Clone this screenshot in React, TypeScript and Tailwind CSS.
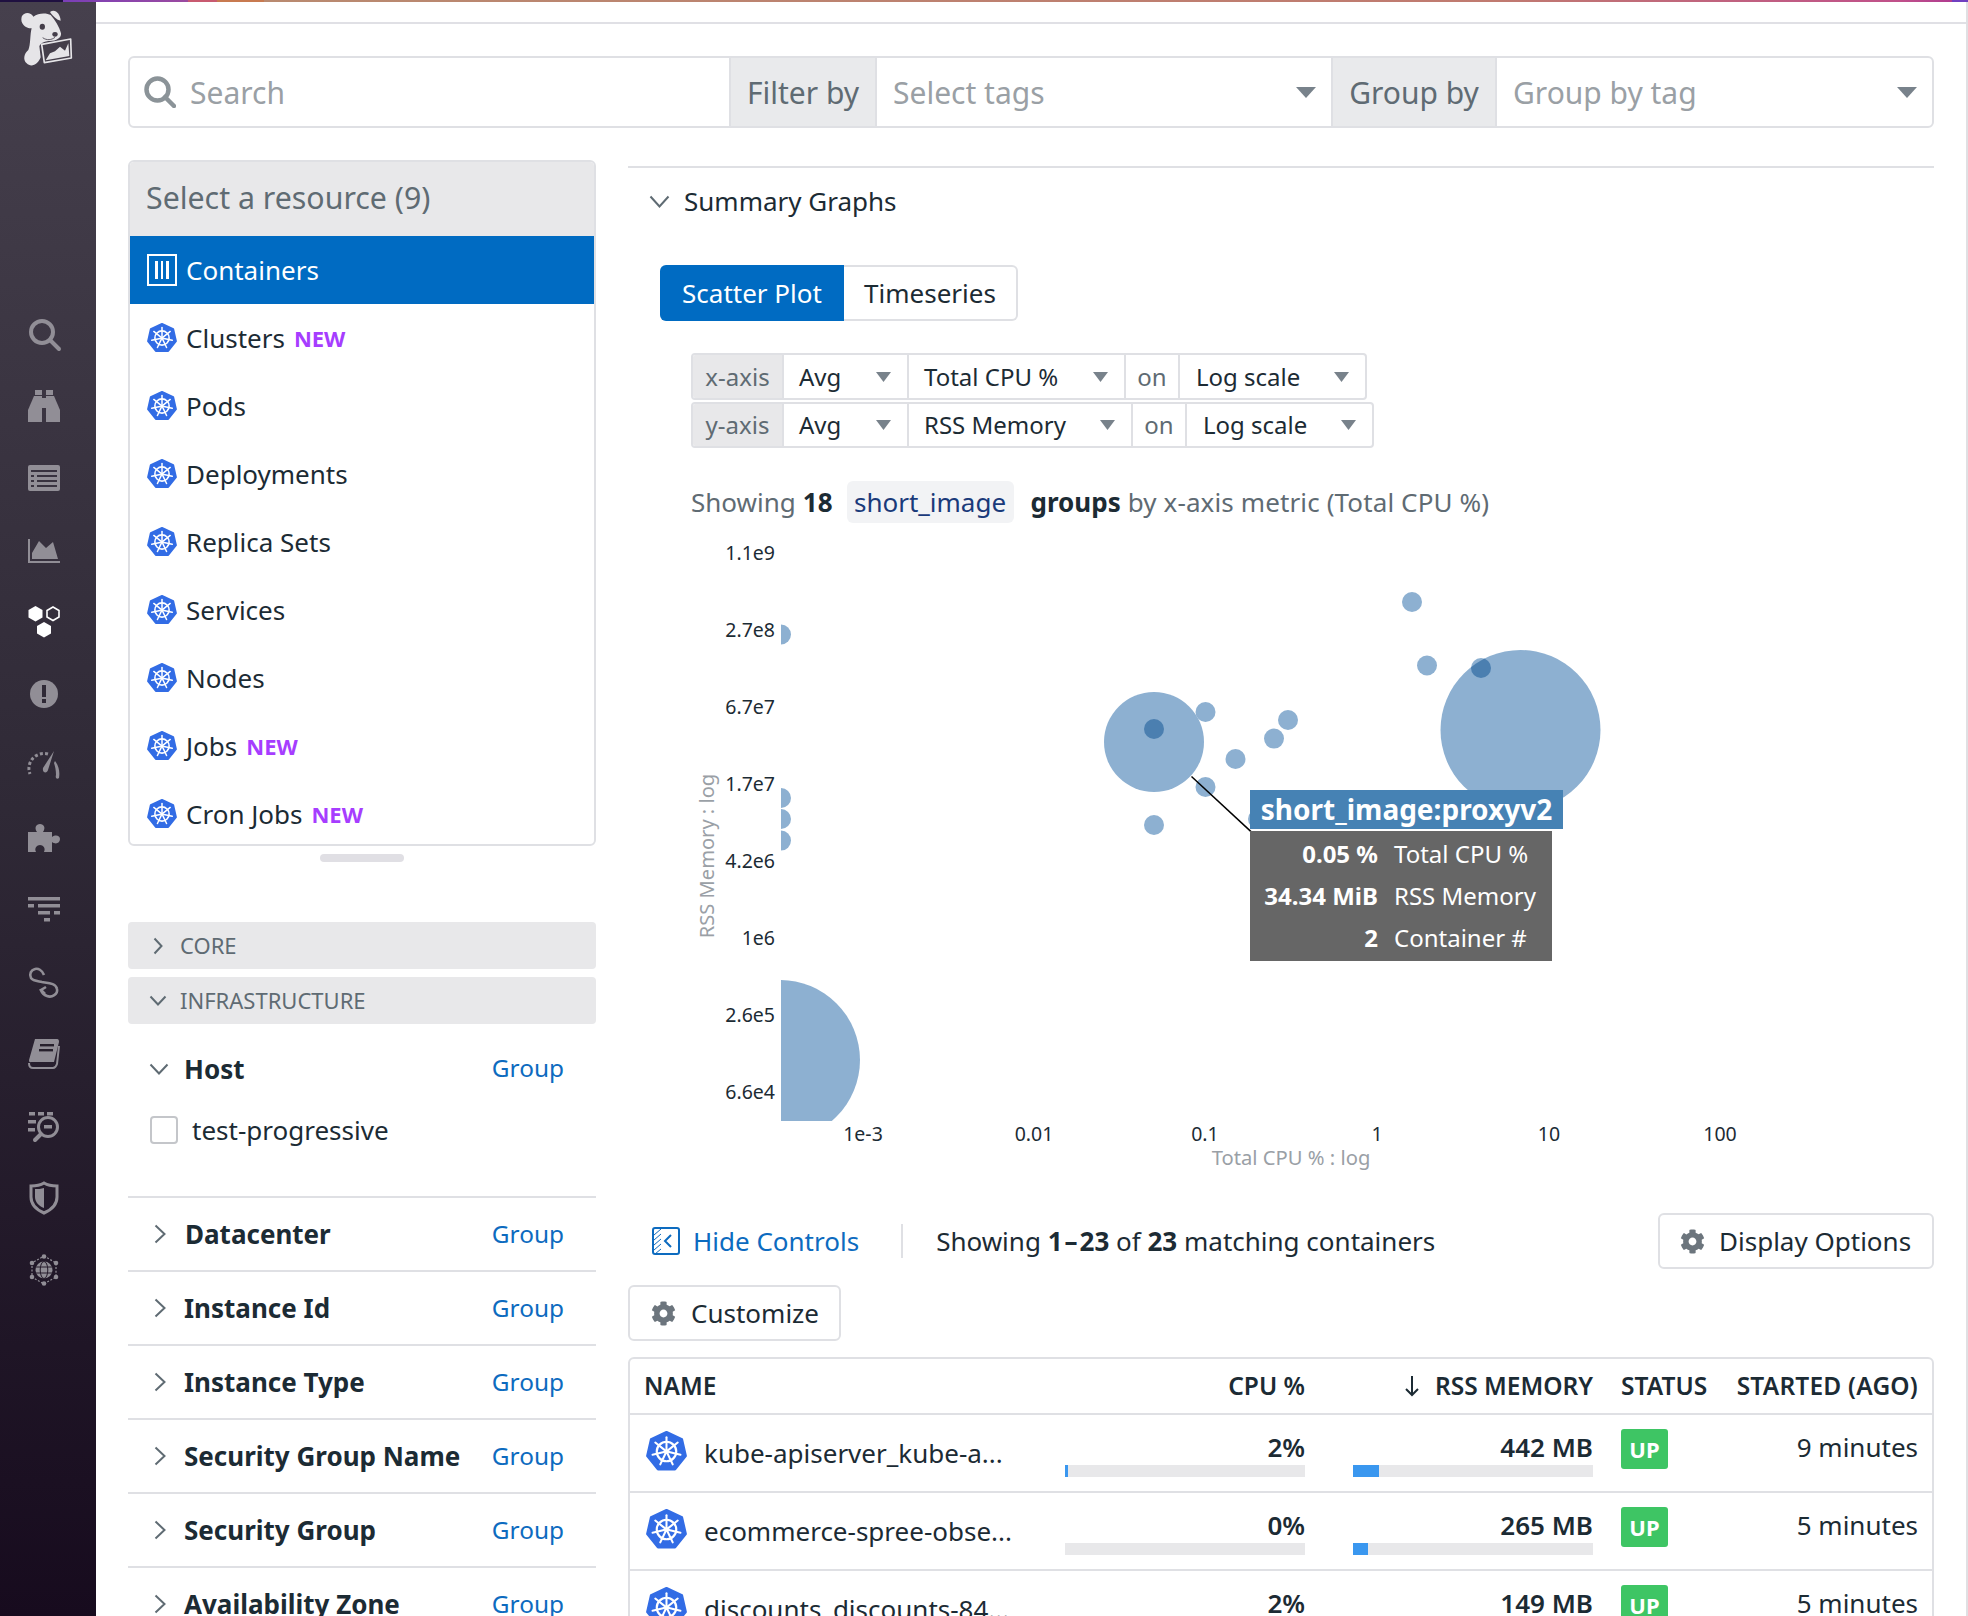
import React from "react";
import { FaCog } from "react-icons/fa";

const G = "#918e96";

function K8s({ size = 30 }: { size?: number }) {
  const spokes = Array.from({ length: 7 }, (_, i) => {
    const a = (-90 + (i * 360) / 7) * (Math.PI / 180);
    return { x: 16 + Math.cos(a) * 11.2, y: 16 + Math.sin(a) * 11.2, x0: 16 + Math.cos(a) * 2, y0: 16 + Math.sin(a) * 2 };
  });
  return (
    <svg width={size} height={size} viewBox="0 0 32 32" className="shrink-0">
      <polygon points="16,1 28,6.6 30.9,19.4 22.6,29.8 9.4,29.8 1.1,19.4 4,6.6" fill="#326ce5" stroke="#326ce5" strokeWidth="2" strokeLinejoin="round" />
      <circle cx="16" cy="16" r="7.6" fill="none" stroke="#fff" strokeWidth="1.7" />
      <circle cx="16" cy="16" r="2" fill="#fff" />
      {spokes.map((s, i) => (
        <line key={i} x1={s.x0} y1={s.y0} x2={s.x} y2={s.y} stroke="#fff" strokeWidth="1.6" strokeLinecap="round" />
      ))}
    </svg>
  );
}

function Chevron({ dir, color = "#5f6b73", w = 12, h = 20 }: { dir: "right" | "down"; color?: string; w?: number; h?: number }) {
  return (
    <svg width={w} height={h} viewBox={`0 0 ${w} ${h}`} className="shrink-0">
      {dir === "right" ? (
        <polyline points={`1.5,1.5 ${w - 1.5},${h / 2} 1.5,${h - 1.5}`} fill="none" stroke={color} strokeWidth="2" />
      ) : (
        <polyline points={`1.5,1.5 ${w / 2},${h - 1.5} ${w - 1.5},1.5`} fill="none" stroke={color} strokeWidth="2" />
      )}
    </svg>
  );
}

function Caret({ w = 15, h = 10, color = "#78828b" }: { w?: number; h?: number; color?: string }) {
  return (
    <svg width={w} height={h} viewBox={`0 0 ${w} ${h}`} className="shrink-0">
      <polygon points={`0,0 ${w},0 ${w / 2},${h}`} fill={color} />
    </svg>
  );
}

function Logo() {
  return (
    <svg width="96" height="70" viewBox="0 6 288 210" className="shrink-0">
      <g fill="#e6e5e8">
        <path d="M100 50C115 38 140 38 152 45C165 60 178 80 183 100C185 115 165 125 145 123C130 125 122 130 118 138L122 172C116 190 95 205 80 190C68 180 72 160 85 150C92 135 90 100 95 85C75 85 60 70 65 50C72 35 92 35 100 50Z" />
        <path d="M150 36C165 25 180 40 182 62C170 60 160 50 150 36Z" />
      </g>
      <polygon points="125,133 212,117 214,174 133,188" fill="#443e4a" stroke="#e6e5e8" strokeWidth="5" strokeLinejoin="round" />
      <polygon points="137,181 150,160 165,154 180,140 195,152 205,130 208,168" fill="#e6e5e8" />
      <ellipse cx="127" cy="80" rx="8" ry="9" fill="#443e4a" />
      <ellipse cx="165" cy="103" rx="8" ry="7" fill="#443e4a" />
      <path d="M128 113C140 122 155 120 165 112" fill="none" stroke="#443e4a" strokeWidth="2.5" />
    </svg>
  );
}

const side: React.ReactNode[] = [
  <g key="s" fill="none" stroke={G} strokeWidth="4"><circle cx="14" cy="14" r="11" /><line x1="22" y1="22" x2="31" y2="31" strokeLinecap="round" strokeWidth="4" /></g>,
  <g key="b" fill={G}><rect x="7" y="0" width="7" height="5" /><rect x="18" y="0" width="7" height="5" /><path d="M6 6H14V32H0V20Z" /><path d="M18 6H26L32 20V32H18Z" /><rect x="14" y="8" width="4" height="10" /></g>,
  <g key="l"><rect x="0" y="3" width="32" height="26" rx="2" fill={G} /><g fill="#38323f"><rect x="3" y="8" width="26" height="2" /><rect x="3" y="13" width="3" height="2" /><rect x="9" y="13" width="20" height="2" /><rect x="3" y="18" width="3" height="2" /><rect x="9" y="18" width="20" height="2" /><rect x="3" y="23" width="3" height="2" /><rect x="9" y="23" width="20" height="2" /></g></g>,
  <g key="c" fill={G} transform="translate(0 3)"><rect x="0" y="2" width="2" height="24" /><rect x="0" y="24" width="32" height="2" /><path d="M4 22V16L11 4L18 11L25 5L30 22Z" /></g>,
  <g key="h"><polygon points="7.5,0 14.5,4 14.5,11.5 7.5,15.5 0.5,11.5 0.5,4" fill="#fff" /><polygon points="25,1 31,4.5 31,11 25,14.5 19,11 19,4.5" fill="none" stroke="#fff" strokeWidth="1.6" /><polygon points="16,16 23,20 23,27.5 16,31.5 9,27.5 9,20" fill="#fff" /></g>,
  <g key="a"><circle cx="16" cy="16" r="14" fill={G} /><rect x="14" y="7" width="4" height="12" fill="#2f2936" /><rect x="14" y="21" width="4" height="4" fill="#2f2936" /></g>,
  <g key="g" fill={G}><path d="M26 1L20 20C19 24 14 23 15 18Z" /><path d="M27 11C31 16 32 22 31 28C29 30 27 28 28 25C28 20 27 16 26 13Z" /><path d="M20 4A15 15 0 0 0 2 24" fill="none" stroke={G} strokeWidth="3" strokeDasharray="3 2.2" /></g>,
  <g key="p" fill={G} transform="translate(0 2)"><path d="M0 8H9C6 4 8 0 12 0C16 0 18 4 15 8H24V13C28 10 32 12 32 15C32 19 28 21 24 18V28H16C18 24 15 21 12 21C9 21 6 24 8 28H0Z" /></g>,
  <g key="f" fill={G} transform="translate(0 3)"><rect x="0" y="0" width="32" height="3.5" /><rect x="0" y="7" width="6" height="3.5" /><rect x="10" y="7" width="22" height="3.5" /><rect x="10" y="14" width="12" height="3.5" /><rect x="26" y="14" width="6" height="3.5" /><rect x="16" y="21" width="6" height="3.5" /></g>,
  <g key="o" fill="none" stroke={G} strokeWidth="2.6"><path d="M16 9C14 4 10 2 7 3C3 4 1 8 3 12C5 15 9 15 14 16C20 17 28 17 29 23C30 28 24 32 19 30C16 29 14 27 13 24" /><polyline points="18,21 13,24 17,28" /></g>,
  <g key="k" fill={G}><path d="M7 1H29C31 1 31 3 31 4L26 24H4C2 24 1 25 1 22Z" /><path d="M1 25C1 29 3 30 5 30H25C27 30 28 29 29 26L31 8" fill="none" stroke={G} strokeWidth="2" /><rect x="12" y="6" width="14" height="2.4" fill="#26202c" /><rect x="11" y="11" width="14" height="2.4" fill="#26202c" /></g>,
  <g key="q" transform="translate(0 2)"><g fill={G}><rect x="1" y="0" width="6" height="3.5" /><rect x="10" y="0" width="6" height="3.5" /><rect x="19" y="0" width="6" height="3.5" /><rect x="0" y="8" width="8" height="3.5" /><rect x="0" y="16" width="7" height="3.5" /></g><circle cx="20" cy="15" r="9.5" fill="none" stroke={G} strokeWidth="3" /><rect x="16" y="13" width="8" height="3.5" fill={G} /><line x1="13" y1="22" x2="7" y2="28" stroke={G} strokeWidth="4" strokeLinecap="round" /></g>,
  <g key="d"><path d="M16 1C21 4 26 4 29 4V15C29 23 23 28 16 31C9 28 3 23 3 15V4C6 4 11 4 16 1Z" fill="none" stroke={G} strokeWidth="3" /><path d="M16 6V26C11 24 7 20 7 15V7C10 7 13 7 16 6Z" fill={G} /></g>,
  <g key="w"><circle cx="16" cy="16" r="8.5" fill={G} /><g fill="none" stroke="#241b2a" strokeWidth="1"><ellipse cx="16" cy="16" rx="3.8" ry="8.5" /><line x1="7.5" y1="13" x2="24.5" y2="13" /><line x1="7.5" y1="19" x2="24.5" y2="19" /></g><polygon points="16,2 28,9 28,23 16,30 4,23 4,9" fill="none" stroke={G} strokeWidth="1.2" strokeDasharray="2 1.6" /><g fill={G}><circle cx="16" cy="2.5" r="2.3" /><circle cx="28" cy="9" r="2.3" /><circle cx="28" cy="23" r="2.3" /><circle cx="16" cy="29.5" r="2.3" /><circle cx="4" cy="23" r="2.3" /><circle cx="4" cy="9" r="2.3" /></g></g>,
];

const resources = [
  ["Clusters", true],
  ["Pods", false],
  ["Deployments", false],
  ["Replica Sets", false],
  ["Services", false],
  ["Nodes", false],
  ["Jobs", true],
  ["Cron Jobs", true],
] as const;

const facets = ["Datacenter", "Instance Id", "Instance Type", "Security Group Name", "Security Group", "Availability Zone"];

const small = [
  [1412, 602], [1427, 665.5], [1481, 668], [1154, 729], [1205.5, 712], [1288, 720], [1274, 738.6], [1235.5, 759], [1205.5, 787], [1154, 825], [1258, 819],
  [781, 634.5], [781, 798], [781, 819], [781, 840.6],
];

const yTicks = [["1.1e9", 552.5], ["2.7e8", 630], ["6.7e7", 707], ["1.7e7", 784], ["4.2e6", 861], ["1e6", 938], ["2.6e5", 1015], ["6.6e4", 1092]] as const;
const xTicks = [["1e-3", 863], ["0.01", 1034], ["0.1", 1205], ["1", 1377], ["10", 1549], ["100", 1720]] as const;

function Chart() {
  return (
    <div className="relative h-[650px] w-[1306px]">
      <svg width="1306" height="650" viewBox="628 530 1306 650" className="block">
        <defs>
          <clipPath id="plot"><rect x="781" y="530" width="1000" height="591" /></clipPath>
          <clipPath id="bigA"><circle cx="1520.5" cy="730" r="80" /></clipPath>
          <clipPath id="bigB"><circle cx="1154" cy="742" r="50" /></clipPath>
        </defs>
        <g clipPath="url(#plot)" fill="#8db0d1">
          <circle cx="1520.5" cy="730" r="80" />
          <circle cx="1154" cy="742" r="50" />
          <circle cx="780" cy="1060" r="80" />
          {small.map(([x, y], i) => (
            <circle key={i} cx={x} cy={y} r="10" />
          ))}
        </g>
        <circle cx="1481" cy="668" r="10" fill="#4b7fb0" clipPath="url(#bigA)" />
        <circle cx="1154" cy="729" r="10" fill="#4b7fb0" clipPath="url(#bigB)" />
        <line x1="1191.5" y1="776.5" x2="1251" y2="831.6" stroke="#000" strokeWidth="1.5" />
        <g fontSize="19.5" fill="#1c2b34">
          {yTicks.map(([t, y]) => (
            <text key={t} x="775" y={y + 7} textAnchor="end">{t}</text>
          ))}
          {xTicks.map(([t, x]) => (
            <text key={t} x={x} y="1140.5" textAnchor="middle">{t}</text>
          ))}
        </g>
        <text x="1291" y="1165" fontSize="20.2" fill="#9aa0a6" textAnchor="middle">Total CPU % : log</text>
        <text transform="translate(714 856) rotate(-90)" fontSize="20.1" fill="#9aa0a6" textAnchor="middle">RSS Memory : log</text>
      </svg>
      <div className="absolute left-[622px] top-[260px]">
        <div className="flex h-[39px] w-[313px] items-center justify-center bg-[#4682b4] pb-[2px] text-[28px] font-bold text-white">short_image:proxyv2</div>
        <div className="mt-[2px] flex h-[130px] w-[302px] flex-col justify-center bg-[#666666] text-[24px] text-white">
          {[["0.05 %", "Total CPU %"], ["34.34 MiB", "RSS Memory"], ["2", "Container #"]].map(([a, b]) => (
            <div key={b} className="flex h-[42px] items-center">
              <span className="w-[128px] text-right font-bold">{a}</span>
              <span className="ml-[16px]">{b}</span>
            </div>
          ))}
        </div>
      </div>
    </div>
  );
}

function Sel({ w, label, caretR = 16, pl = 15 }: { w: number; label: string; caretR?: number; pl?: number }) {
  return (
    <div className="flex h-full items-center justify-between border-l-2 border-[#dfe0e4] text-[#1c2b34]" style={{ width: w, paddingRight: caretR, paddingLeft: pl }}>
      <span>{label}</span>
      <Caret />
    </div>
  );
}

function AxisRow({ axis, metric, mw, cls }: { axis: string; metric: string; mw: number; cls: string }) {
  return (
    <div className={`flex w-fit items-center overflow-hidden rounded-[4px] border-2 border-[#dfe0e4] text-[24px] ${cls}`}>
      <div className="flex h-full w-[89px] items-center justify-center bg-[#e8e8ea] text-[#5f6b73]">{axis}</div>
      <Sel w={125} label="Avg" />
      <Sel w={mw} label={metric} />
      <div className="flex h-full w-[54px] items-center justify-center border-l-2 border-[#dfe0e4] text-[#5f6b73]">on</div>
      <Sel w={187} label="Log scale" pl={16} />
    </div>
  );
}

const rows = [
  { name: "kube-apiserver_kube-a...", cpu: "2%", cw: 3, mem: "442 MB", mw: 26, t: "9 minutes" },
  { name: "ecommerce-spree-obse...", cpu: "0%", cw: 0, mem: "265 MB", mw: 15, t: "5 minutes" },
  { name: "discounts_discounts-84...", cpu: "2%", cw: 3, mem: "149 MB", mw: 9, t: "5 minutes" },
];

export default function App() {
  return (
    <div className="flex h-[1616px] w-[1968px] flex-col overflow-hidden bg-white font-['Noto_Sans',sans-serif] text-[26px] text-[#1c2b34]">
      <div className="h-[2px] shrink-0 bg-[linear-gradient(90deg,#1f1040_0px,#1f1040_63px,#7a3fb8_63px,#9b4aa0_188px,#c85a70_188px,#c85a70_217px,#c87a50_217px,#c87a50_264px,#b98a70_264px,#c07a70_1500px,#c0508a_1900px,#b03c90_1952px,#7040c0_1952px,#7040c0_100%)]" />
      <div className="flex min-h-0 flex-1">
        <aside className="flex w-[96px] shrink-0 flex-col items-center bg-[linear-gradient(180deg,#46404d_0%,#2f2936_50%,#170b1e_100%)]">
          <Logo />
          <div className="mt-[226px] flex flex-col items-center">
            {side.map((ic, i) => (
              <div key={i} className="flex h-[72px] w-[96px] items-center justify-center pr-[8px]">
                <svg width="32" height="32" viewBox="0 0 32 32" className="overflow-visible">{ic}</svg>
              </div>
            ))}
          </div>
        </aside>

        <main className="min-w-0 flex-1 pr-[32px]">
          <div className="-mr-[32px] h-[22px] border-b-2 border-[#e0e0e5]" />

          <div className="mt-[32px] ml-[32px] flex h-[72px] overflow-hidden rounded-[6px] border-2 border-[#dfe0e4] text-[30px] text-[#9aa0a5]">
            <div className="flex w-[599px] items-center pl-[14px]">
              <svg width="32" height="32" viewBox="0 0 32 32" className="shrink-0">
                <circle cx="13.5" cy="13.5" r="11" fill="none" stroke="#8b9398" strokeWidth="4.5" />
                <line x1="21" y1="21" x2="30" y2="30" stroke="#8b9398" strokeWidth="4.5" strokeLinecap="round" />
              </svg>
              <span className="ml-[14px]">Search</span>
            </div>
            <div className="flex w-[148px] items-center justify-center border-x-2 border-[#dfe0e4] bg-[#e9eaec] text-[#5f6b73]">Filter by</div>
            <div className="flex w-[454px] items-center justify-between pl-[16px] pr-[15px]">
              <span>Select tags</span>
              <Caret w={20} h={11} />
            </div>
            <div className="flex w-[166px] items-center justify-center border-x-2 border-[#dfe0e4] bg-[#e9eaec] text-[#5f6b73]">Group by</div>
            <div className="flex flex-1 items-center justify-between pl-[16px] pr-[15px]">
              <span>Group by tag</span>
              <Caret w={20} h={11} />
            </div>
          </div>

          <div className="mt-[32px] ml-[32px] flex gap-[32px]">
            <div className="w-[468px] shrink-0">
              <div className="h-[686px] overflow-hidden rounded-[6px] border-2 border-[#dfe0e4]">
                <div className="flex h-[74px] items-center bg-[#e8e8ea] pb-[2px] pl-[16px] text-[30.3px] text-[#5f6b73]">Select a resource (9)</div>
                <div className="flex h-[68px] items-center bg-[#006bc2] pl-[17px] text-white">
                  <div className="flex h-[32px] w-[30px] shrink-0 items-center justify-center gap-[3px] border-2 border-white">
                    <span className="h-[18px] w-[2.5px] bg-white" />
                    <span className="h-[18px] w-[2.5px] bg-white" />
                    <span className="h-[18px] w-[2.5px] bg-white" />
                  </div>
                  <span className="ml-[9px]">Containers</span>
                </div>
                {resources.map(([n, isNew]) => (
                  <div key={n} className="flex h-[68px] items-center pl-[17px]">
                    <K8s />
                    <span className="ml-[9px]">{n}</span>
                    {isNew && <span className="ml-[9px] text-[22px] font-bold text-[#a63dff]">NEW</span>}
                  </div>
                ))}
              </div>
              <div className="mx-auto mt-[8px] h-[8px] w-[84px] rounded-full bg-[#e0dfe4]" />

              <div className="mt-[60px] flex h-[47px] items-center rounded-[4px] bg-[#e8e8ea] pl-[25px] text-[22px] text-[#5f6b73]">
                <Chevron dir="right" w={10} h={18} />
                <span className="ml-[17px]">CORE</span>
              </div>
              <div className="mt-[8px] flex h-[47px] items-center rounded-[4px] bg-[#e8e8ea] pl-[21px] text-[22px] text-[#5f6b73]">
                <Chevron dir="down" w={18} h={11} />
                <span className="ml-[13px]">INFRASTRUCTURE</span>
              </div>

              <div className="mt-[8px] flex h-[74px] items-center justify-between pl-[21px] pr-[32px]">
                <div className="flex items-center">
                  <Chevron dir="down" w={20} h={12} />
                  <span className="ml-[15px] font-bold">Host</span>
                </div>
                <span className="pb-[1px] text-[24.4px] text-[#0d6bbf]">Group</span>
              </div>
              <div className="flex h-[48px] items-center pl-[22px]">
                <span className="h-[28px] w-[28px] rounded-[4px] border-2 border-[#c4c6ca]" />
                <span className="ml-[14px]">test-progressive</span>
              </div>
              <div className="mt-[42px]">
                {facets.map((f) => (
                  <div key={f} className="flex h-[74px] items-center justify-between border-t-2 border-[#dfe0e4] pl-[26px] pr-[32px]">
                    <div className="flex items-center">
                      <Chevron dir="right" w={12} h={20} />
                      <span className={f === "Datacenter" ? "ml-[19px] font-bold" : "ml-[18px] font-bold"}>{f}</span>
                    </div>
                    <span className="pt-[1px] text-[24.4px] text-[#0d6bbf]">Group</span>
                  </div>
                ))}
              </div>
            </div>

            <div className="min-w-0 flex-1">
              <div className="mt-[6px] h-[70px] border-t-2 border-[#dfe0e4] pl-[21px]">
                <div className="flex h-[66px] items-center">
                  <Chevron dir="down" w={21} h={13} />
                  <span className="ml-[14px]">Summary Graphs</span>
                </div>
              </div>

              <div className="mt-[29px] ml-[32px] flex h-[56px] w-[358px]">
                <div className="flex w-[184px] items-center justify-center rounded-l-[6px] bg-[#006bc2] text-white">Scatter Plot</div>
                <div className="flex flex-1 items-center justify-center rounded-r-[6px] border-2 border-l-0 border-[#dfe0e4]">Timeseries</div>
              </div>

              <div className="ml-[63px] mt-[32px]">
                <AxisRow axis="x-axis" metric="Total CPU %" mw={217} cls="h-[47px]" />
                <AxisRow axis="y-axis" metric="RSS Memory" mw={224} cls="mt-[2px] h-[46px]" />
              </div>

              <div className="ml-[63px] mt-[33px] flex h-[42px] items-center text-[#5f6b73]">
                <span className="pt-[1px]">Showing</span>
                <span className="ml-[7px] pt-[1px] font-bold text-[#1c2b34]">18</span>
                <span className="ml-[14px] flex h-[42px] w-[167px] items-center justify-center rounded-[6px] bg-[#f2f3f5] text-[#1a3a7a]">short_image</span>
                <span className="ml-[17px] pt-[1px] font-bold text-[#1c2b34]">groups</span>
                <span className="ml-[7px] pt-[1px] tracking-[0.12px]">by x-axis metric (Total CPU %)</span>
              </div>

              <div className="mt-[7px]">
                <Chart />
              </div>

              <div className="mt-[33px] flex h-[56px] items-center justify-between">
                <div className="flex items-center">
                  <svg width="28" height="28" viewBox="0 0 28 28" className="ml-[24px] shrink-0">
                    <rect x="1" y="1" width="26" height="26" rx="2" fill="none" stroke="#0d6bbf" strokeWidth="2" />
                    <g stroke="#0d6bbf" strokeWidth="1"><line x1="2" y1="8" x2="9" y2="2" /><line x1="2" y1="13" x2="9" y2="7" /><line x1="2" y1="18" x2="9" y2="12" /><line x1="2" y1="23" x2="9" y2="17" /><line x1="3" y1="27" x2="9" y2="22" /></g>
                    <polyline points="19,8 13,14 19,20" fill="none" stroke="#0d6bbf" strokeWidth="2" />
                  </svg>
                  <span className="ml-[13px] text-[#0d6bbf]">Hide Controls</span>
                  <span className="ml-[42px] h-[34px] w-[2px] bg-[#dfe0e4]" />
                  <span className="ml-[33px]">Showing <b>1<span className="mx-[2px]">–</span>23</b> of <b>23</b> matching containers</span>
                </div>
                <div className="flex h-[56px] w-[276px] items-center rounded-[6px] border-2 border-[#dfe0e4] pl-[20px]">
                  <FaCog className="h-[25px] w-[25px] shrink-0 text-[#6c757d]" />
                  <span className="ml-[14px]">Display Options</span>
                </div>
              </div>

              <div className="mt-[16px] flex h-[56px] w-[213px] items-center rounded-[6px] border-2 border-[#dfe0e4] pl-[21px]">
                <FaCog className="h-[25px] w-[25px] shrink-0 text-[#6c757d]" />
                <span className="ml-[15px]">Customize</span>
              </div>

              <div className="mt-[16px] rounded-t-[6px] border-2 border-[#dfe0e4]">
                <div className="flex h-[56px] items-center border-b-2 border-[#dfe0e4] pl-[14px] pr-[14px] text-[24.5px] font-semibold">
                  <span className="w-[421px]">NAME</span>
                  <span className="w-[240px] text-right">CPU %</span>
                  <div className="ml-[48px] flex w-[240px] items-center justify-end">
                    <svg width="16" height="22" viewBox="0 0 16 22" className="mr-[15px] shrink-0">
                      <path d="M8 1V20M2 14L8 20L14 14" fill="none" stroke="#1c2b34" strokeWidth="2" />
                    </svg>
                    <span className="whitespace-nowrap">RSS MEMORY</span>
                  </div>
                  <span className="ml-[28px] w-[90px]">STATUS</span>
                  <span className="flex-1 whitespace-nowrap text-right tracking-[0.2px]">STARTED (AGO)</span>
                </div>
                {rows.map((r) => (
                  <div key={r.name} className="flex h-[78px] items-start border-b-2 border-[#dfe0e4] pl-[16px] pr-[14px]">
                    <div className="flex h-[76px] w-[419px] items-center pb-[4px]">
                      <K8s size={41} />
                      <span className="ml-[17px] mt-[4px] whitespace-nowrap">{r.name}</span>
                    </div>
                    <div className="w-[240px] pt-[16px]">
                      <div className="h-[34px] text-right font-semibold leading-[33px]">{r.cpu}</div>
                      <div className="h-[12px] bg-[#e8e8ea]"><div className="h-full bg-[#3a97ef]" style={{ width: r.cw }} /></div>
                    </div>
                    <div className="ml-[48px] w-[240px] pt-[16px]">
                      <div className="h-[34px] text-right font-semibold leading-[33px]">{r.mem}</div>
                      <div className="h-[12px] bg-[#e8e8ea]"><div className="h-full bg-[#3a97ef]" style={{ width: r.mw }} /></div>
                    </div>
                    <div className="ml-[28px] mt-[14px] flex h-[40px] w-[47px] shrink-0 items-center justify-center rounded-[3px] bg-[#3ec564] text-[22px] font-bold text-white">UP</div>
                    <div className="flex-1 pt-[16px] text-right leading-[33px]">{r.t}</div>
                  </div>
                ))}
              </div>
            </div>
          </div>
        </main>
        <div className="w-[2px] shrink-0 bg-[#e0e0e3]" />
      </div>
    </div>
  );
}
